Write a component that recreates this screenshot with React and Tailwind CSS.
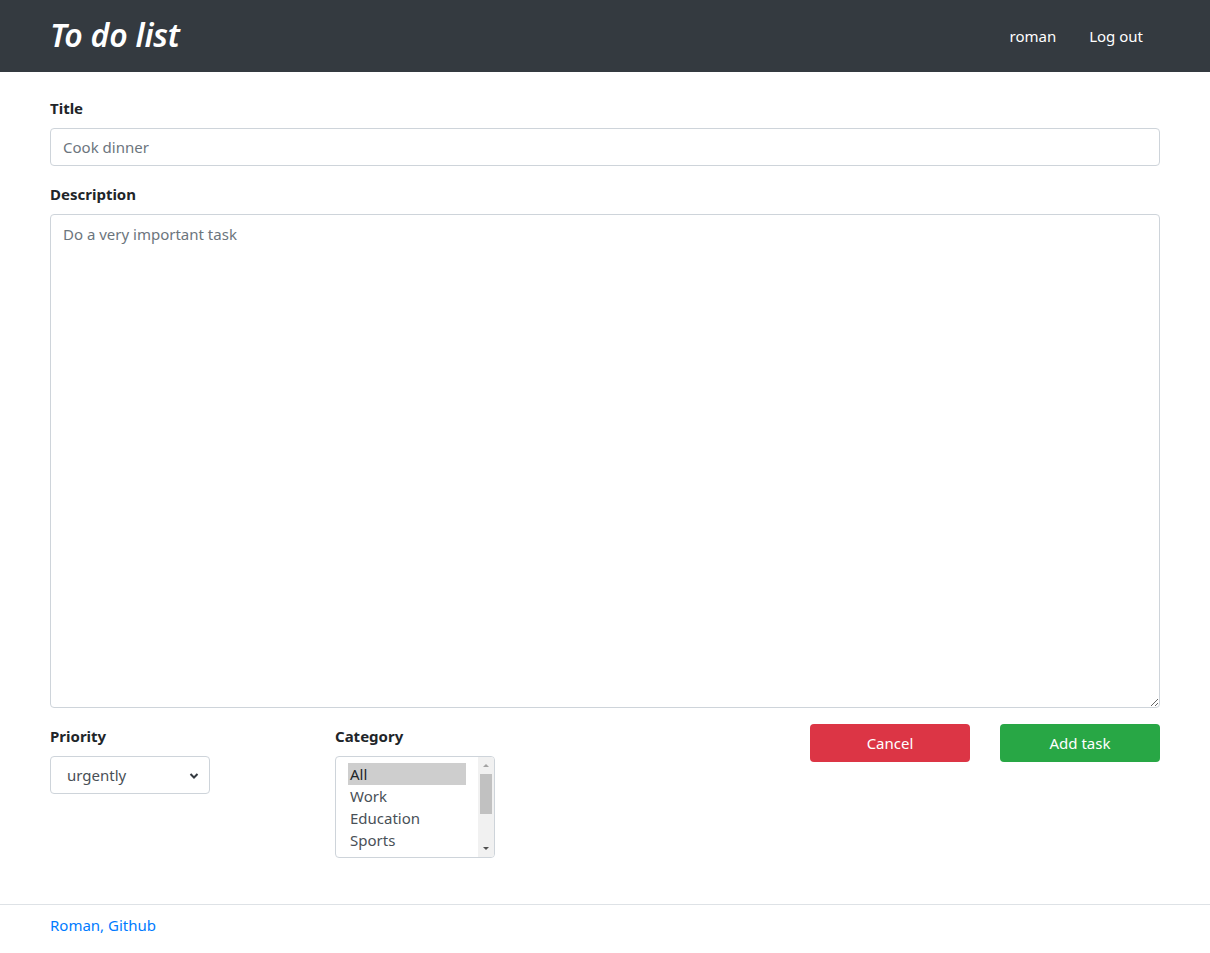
import React from "react";

const font = { fontFamily: '"Segoe UI", "Noto Sans", "Open Sans", sans-serif' };

function Chevron() {
  return (
    <svg width="10" height="8" viewBox="0 0 10 8" className="absolute right-[10px] top-[15px]">
      <path d="M1.5 2 L5 5.5 L8.5 2" fill="none" stroke="#343a40" strokeWidth="2" />
    </svg>
  );
}

export default function App() {
  return (
    <div className="min-h-[953px] bg-white text-[#212529] text-[15px]" style={font}>
      <header className="h-[72px] bg-[#343a40] flex items-center">
        <div className="w-[1110px] mx-auto flex items-center justify-between">
          <h1 className="text-white italic font-semibold text-[32px] leading-none tracking-[-0.2px] -mt-[3px]">To do list</h1>
          <nav className="flex items-center gap-[33px] pr-[17px] text-white text-[15px]">
            <span>roman</span>
            <span>Log out</span>
          </nav>
        </div>
      </header>

      <main className="w-[1110px] mx-auto pt-[24px]">
        <div className="mb-[16px]">
          <label className="block font-bold leading-[24px] mb-[8px]">Title</label>
          <input
            className="block w-full h-[38px] px-[12px] border border-[#ced4da] rounded-[4px] text-[#495057] placeholder:text-[#6c757d] outline-none"
            placeholder="Cook dinner"
          />
        </div>
        <div className="mb-[16px]">
          <label className="block font-bold leading-[24px] mb-[8px]">Description</label>
          <textarea
            className="block w-full h-[494px] px-[12px] py-[7px] leading-[24px] border border-[#ced4da] rounded-[4px] text-[#495057] placeholder:text-[#6c757d] outline-none"
            placeholder="Do a very important task"
          />
        </div>

        <div className="flex items-start">
          <div className="w-[285px]">
            <label className="block font-bold leading-[24px] mb-[8px]">Priority</label>
            <div className="relative w-[160px] h-[38px] border border-[#ced4da] rounded-[4px] flex items-center pl-[16px] pt-[1px] text-[#495057]">
              urgently
              <Chevron />
            </div>
          </div>
          <div className="w-[160px]">
            <label className="block font-bold leading-[24px] mb-[8px]">Category</label>
            <div className="relative h-[102px] border border-[#ced4da] rounded-[4px] overflow-hidden flex">
              <div className="flex-1 pl-[12px] pr-[12px] pt-[6px] text-[#495057] leading-[22px]">
                <div className="bg-[#cecece] text-[#212529] pl-[2px]">All</div>
                <div className="pl-[2px]">Work</div>
                <div className="pl-[2px]">Education</div>
                <div className="pl-[2px]">Sports</div>
                <div className="pl-[2px]">Health</div>
              </div>
              <div className="w-[16px] bg-[#f1f1f1] flex flex-col items-center">
                <svg width="8" height="16" viewBox="0 0 8 16" className="shrink-0">
                  <path d="M1 10 L4 7 L7 10 Z" fill="#a3a3a3" />
                </svg>
                <div className="w-[12px] h-[40px] bg-[#c1c1c1] mt-[1px]" />
                <div className="flex-1" />
                <svg width="8" height="16" viewBox="0 0 8 16" className="shrink-0">
                  <path d="M1 6 L4 9 L7 6 Z" fill="#505050" />
                </svg>
              </div>
            </div>
          </div>
          <div className="flex-1" />
          <div className="flex gap-[30px]">
            <button className="w-[160px] h-[38px] bg-[#dc3545] text-white rounded-[4px] pt-[1px]">Cancel</button>
            <button className="w-[160px] h-[38px] bg-[#28a745] text-white rounded-[4px] pt-[1px]">Add task</button>
          </div>
        </div>
      </main>

      <footer className="mt-[46px] border-t border-[#dee2e6] pt-[8px]">
        <div className="w-[1110px] mx-auto leading-[24px] text-[#007bff]">Roman, Github</div>
      </footer>
    </div>
  );
}
